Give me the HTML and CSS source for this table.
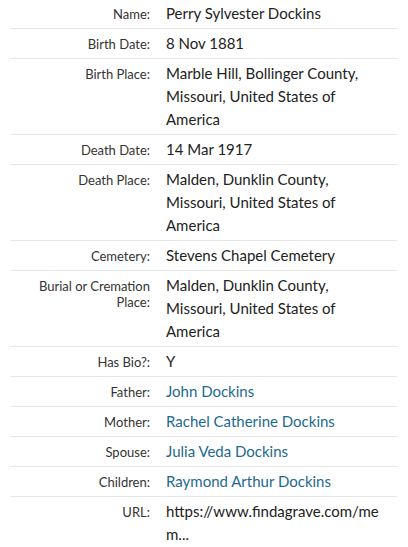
FILE: index.html
```html
<!DOCTYPE html>
<html>
<head>
<meta charset="utf-8">
<link rel="stylesheet" href="styles.css">
</head>
<body>
<div class="facts">
  <div class="row"><div class="label">Name:</div><div class="value">Perry Sylvester Dockins</div></div>
  <div class="row"><div class="label">Birth Date:</div><div class="value">8 Nov 1881</div></div>
  <div class="row"><div class="label">Birth Place:</div><div class="value">Marble Hill, Bollinger County, Missouri, United States of America</div></div>
  <div class="row"><div class="label">Death Date:</div><div class="value">14 Mar 1917</div></div>
  <div class="row"><div class="label">Death Place:</div><div class="value">Malden, Dunklin County, Missouri, United States of America</div></div>
  <div class="row"><div class="label">Cemetery:</div><div class="value">Stevens Chapel Cemetery</div></div>
  <div class="row"><div class="label">Burial or Cremation Place:</div><div class="value">Malden, Dunklin County, Missouri, United States of America</div></div>
  <div class="row"><div class="label">Has Bio?:</div><div class="value">Y</div></div>
  <div class="row"><div class="label">Father:</div><div class="value"><a class="link" href="#">John Dockins</a></div></div>
  <div class="row"><div class="label">Mother:</div><div class="value"><a class="link" href="#">Rachel Catherine Dockins</a></div></div>
  <div class="row"><div class="label">Spouse:</div><div class="value"><a class="link" href="#">Julia Veda Dockins</a></div></div>
  <div class="row"><div class="label">Children:</div><div class="value"><a class="link" href="#">Raymond Arthur Dockins</a></div></div>
  <div class="row last"><div class="label">URL:</div><div class="value url">https://www.findagrave.com/mem...</div></div>
</div>
</body>
</html>
```

FILE: styles.css
```css
html, body {
  margin: 0;
  padding: 0;
  background: #ffffff;
}
body {
  font-family: Lato, "Noto Sans", sans-serif;
}
.facts {
  margin: -1px 11px 0 10px;
}
.row {
  display: flex;
  gap: 16px;
  padding: 3px 0;
  border-bottom: 1px solid #e6e6e6;
}
.row.last {
  border-bottom: none;
}
.label {
  flex: 0 0 140px;
  text-align: right;
  font-size: 13px;
  line-height: 16px;
  padding-top: 4px;
  color: #333333;
}
.value {
  flex: 1;
  font-size: 15px;
  line-height: 23px;
  color: #222222;
  padding-right: 12px;
}
.link {
  color: #1d6a8e;
  text-decoration: none;
}
.url {
  word-break: break-all;
}
```
